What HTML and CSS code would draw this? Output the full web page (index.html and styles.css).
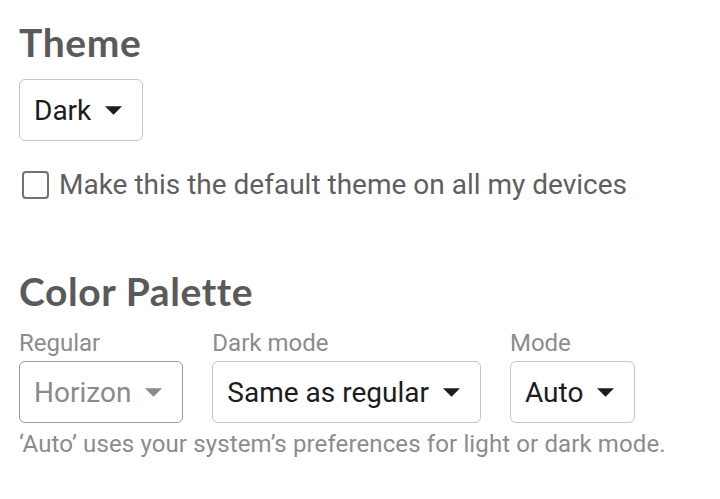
FILE: index.html
```html
<!DOCTYPE html>
<html lang="en">
<head>
<meta charset="utf-8">
<title>Appearance settings</title>
<link rel="stylesheet" href="styles.css">
</head>
<body>
<main class="page">
  <h2 class="heading heading-theme">Theme</h2>
  <div class="select select-theme">
    <span class="select-value">Dark</span>
    <svg class="caret" viewBox="0 0 10 5" width="17" height="9" aria-hidden="true"><path d="M0 0l5 5 5-5z"/></svg>
  </div>
  <label class="check-row">
    <span class="checkbox"></span>
    <span class="check-text">Make this the default theme on all my devices</span>
  </label>

  <h2 class="heading heading-palette">Color Palette</h2>
  <div class="fields">
    <div class="field">
      <div class="field-label">Regular</div>
      <div class="select select-disabled">
        <span class="select-value">Horizon</span>
        <svg class="caret" viewBox="0 0 10 5" width="17" height="9" aria-hidden="true"><path d="M0 0l5 5 5-5z"/></svg>
      </div>
    </div>
    <div class="field">
      <div class="field-label">Dark mode</div>
      <div class="select">
        <span class="select-value">Same as regular</span>
        <svg class="caret" viewBox="0 0 10 5" width="17" height="9" aria-hidden="true"><path d="M0 0l5 5 5-5z"/></svg>
      </div>
    </div>
    <div class="field">
      <div class="field-label">Mode</div>
      <div class="select">
        <span class="select-value">Auto</span>
        <svg class="caret" viewBox="0 0 10 5" width="17" height="9" aria-hidden="true"><path d="M0 0l5 5 5-5z"/></svg>
      </div>
    </div>
  </div>
  <p class="help">‘Auto’ uses your system’s preferences for light or dark mode.</p>
</main>
</body>
</html>
```

FILE: styles.css
```css
html, body {
  margin: 0;
  padding: 0;
  background: #ffffff;
}

body {
  font-family: Roboto, "Liberation Sans", sans-serif;
  color: #1c1c1c;
}

.page {
  padding: 0 19px;
  display: flex;
  flex-direction: column;
  align-items: flex-start;
}

.heading {
  font-family: Lato, "Open Sans", sans-serif;
  font-weight: 700;
  font-size: 39px;
  line-height: 46px;
  letter-spacing: 0.6px;
  color: #5a5a5a;
  margin: 0;
}

.heading-theme {
  margin-top: 19px;
}

.select {
  box-sizing: border-box;
  height: 62px;
  display: flex;
  align-items: center;
  padding: 1px 20px 0 14px;
  border: 1px solid #c6c6c6;
  border-radius: 6px;
  background: #ffffff;
}

.select-theme {
  margin-top: 14px;
}

.select-value {
  font-size: 28px;
  line-height: 32px;
  color: #1c1c1c;
}

.caret {
  display: block;
  margin-left: 14px;
  fill: #1c1c1c;
}

.select-disabled {
  border-color: #9a9a9a;
}

.select-disabled .select-value {
  color: #8a8a8a;
}

.select-disabled .caret {
  fill: #8a8a8a;
}

.check-row {
  margin-top: 28px;
  display: flex;
  align-items: center;
  padding-left: 3px;
}

.checkbox {
  box-sizing: border-box;
  width: 27px;
  height: 28px;
  border: 2px solid #727272;
  border-radius: 4px;
  margin-right: 10px;
}

.check-text {
  font-size: 28px;
  line-height: 32px;
  color: #5f5f5f;
}

.heading-palette {
  margin-top: 67px;
}

.fields {
  margin-top: 15px;
  display: flex;
  gap: 29px;
}

.field {
  display: flex;
  flex-direction: column;
  align-items: flex-start;
}

.field-label {
  font-size: 24px;
  line-height: 28px;
  color: #8c8c8c;
  margin-bottom: 4px;
}

.help {
  margin: 7px 0 0;
  font-size: 24px;
  line-height: 28px;
  letter-spacing: 0.12px;
  color: #8c8c8c;
}
```
